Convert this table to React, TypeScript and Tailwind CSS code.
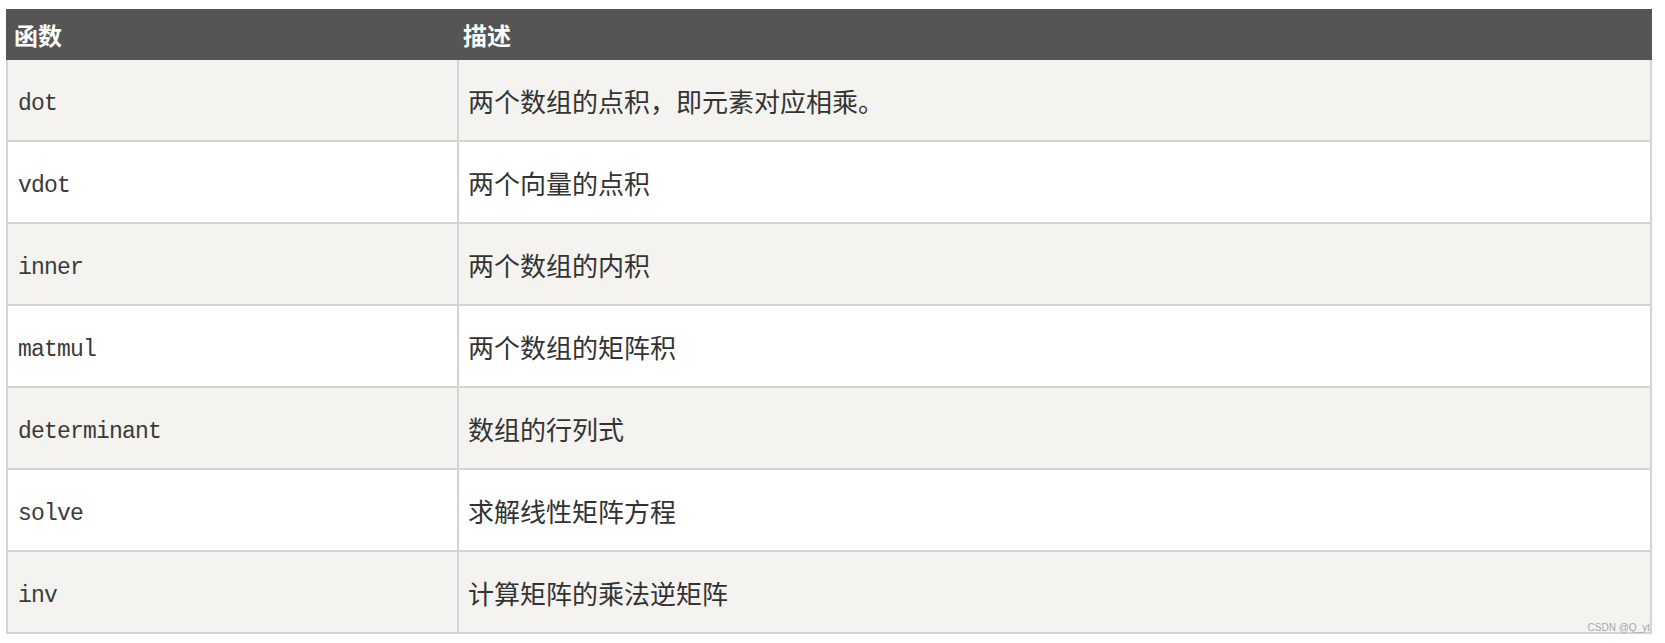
import React from 'react';

type Row = { fn: string; desc: string };

const rows: Row[] = [
  { fn: 'dot', desc: '两个数组的点积，即元素对应相乘。' },
  { fn: 'vdot', desc: '两个向量的点积' },
  { fn: 'inner', desc: '两个数组的内积' },
  { fn: 'matmul', desc: '两个数组的矩阵积' },
  { fn: 'determinant', desc: '数组的行列式' },
  { fn: 'solve', desc: '求解线性矩阵方程' },
  { fn: 'inv', desc: '计算矩阵的乘法逆矩阵' },
];

const cjk = "font-['Noto_Sans_CJK_SC','Noto_Sans',sans-serif]";

const App: React.FC = () => {
  return (
    <div className="w-[1665px] h-[643px] bg-white pt-[9px] pl-[6px]">
      <div className="relative w-[1646px]">
        <div className={`flex items-center h-[51px] bg-[#555555] text-white font-bold text-[24px] ${cjk}`}>
          <div className="w-[453px] shrink-0 pl-[8px]">函数</div>
          <div className="flex-1 pl-[4px]">描述</div>
        </div>

        {rows.map((row, i) => (
          <div
            key={row.fn}
            className={`flex h-[82px] border-x-2 border-b-2 border-[#d4d4d4] ${i % 2 === 0 ? 'bg-[#f4f3ef]' : 'bg-white'}`}
          >
            <div className="w-[451px] shrink-0 border-r-2 border-[#d4d4d4] flex items-center pl-[10px] pt-[8px] leading-none font-['Liberation_Mono',monospace] text-[23px] tracking-[-0.8px] text-[#3a3a3a]">
              {row.fn}
            </div>
            <div className={`flex-1 flex items-center pl-[9px] text-[26px] text-[#333333] ${cjk}`}>
              {row.desc}
            </div>
          </div>
        ))}

        <span className="absolute right-[2px] bottom-[1px] text-[10px] leading-none text-[#a8a8a8] font-['Liberation_Sans',sans-serif]">
          CSDN @Q_yt
        </span>
      </div>
    </div>
  );
};

export default App;
